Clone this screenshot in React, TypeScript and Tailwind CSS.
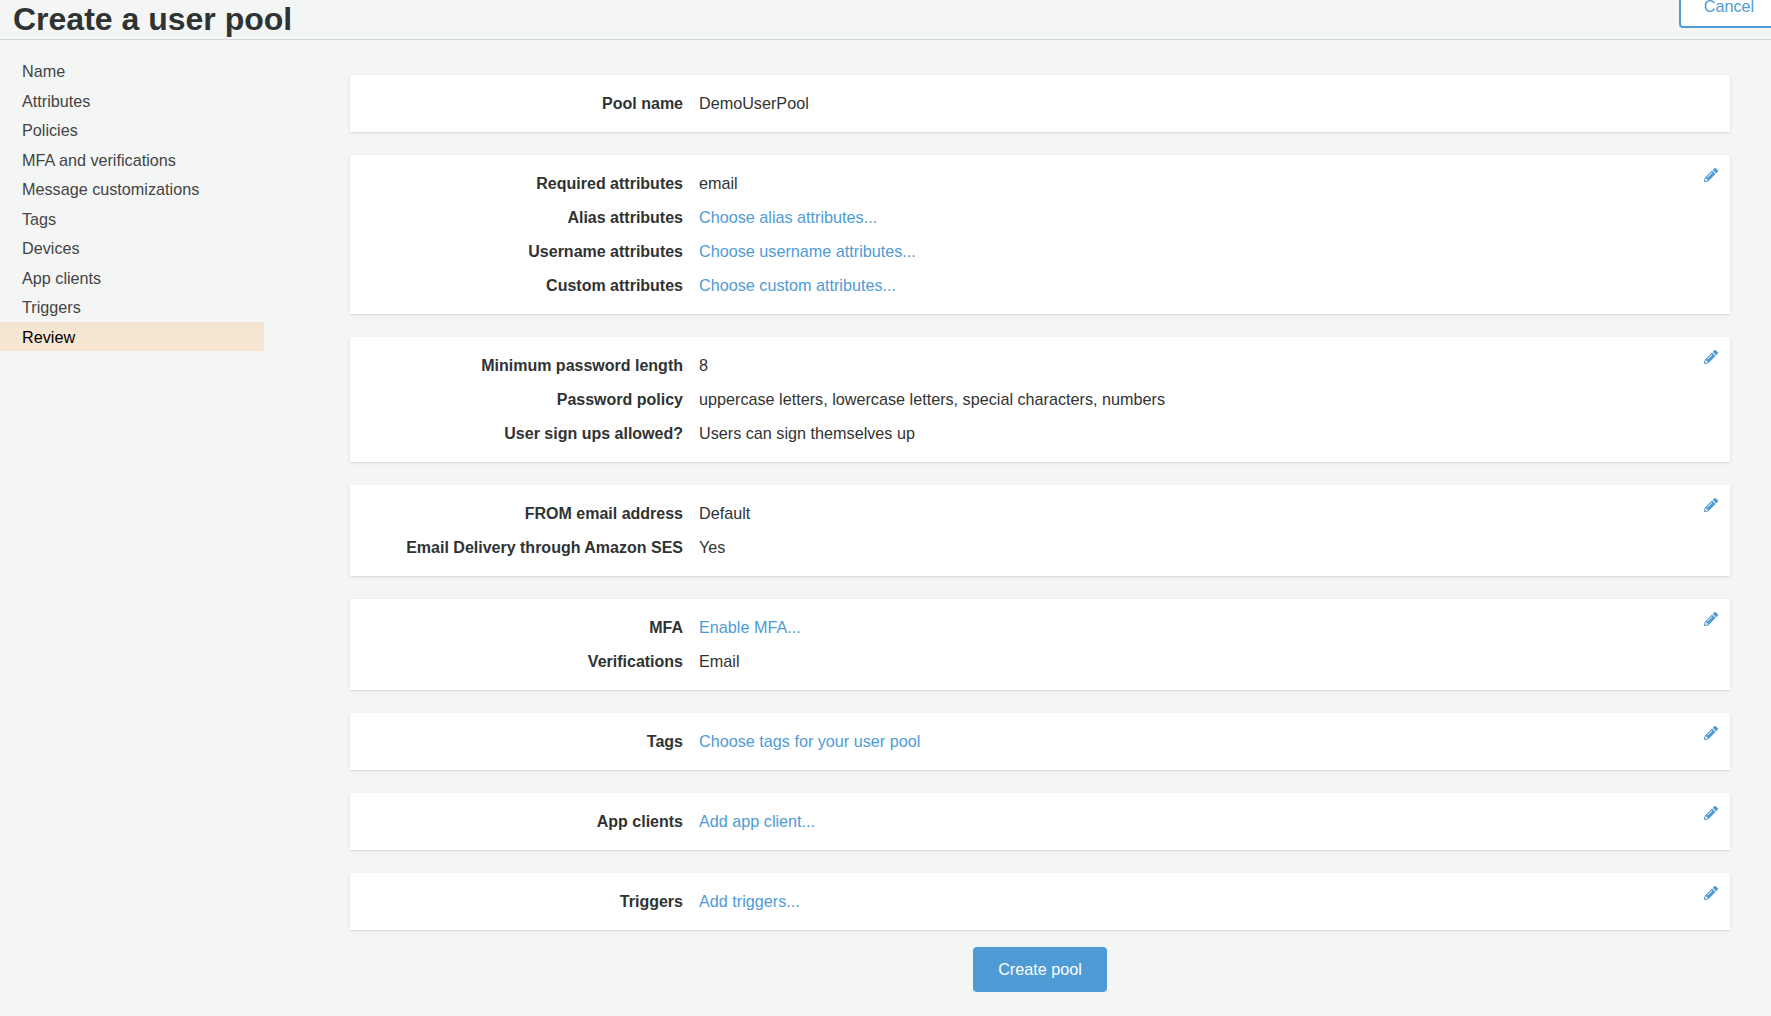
import { FaPencilAlt } from 'react-icons/fa';

const navItems = [
  'Name',
  'Attributes',
  'Policies',
  'MFA and verifications',
  'Message customizations',
  'Tags',
  'Devices',
  'App clients',
  'Triggers',
  'Review',
];

type Row = { label: string; value: string; link?: boolean };

const sections: { rows: Row[]; editable: boolean }[] = [
  { editable: false, rows: [{ label: 'Pool name', value: 'DemoUserPool' }] },
  {
    editable: true,
    rows: [
      { label: 'Required attributes', value: 'email' },
      { label: 'Alias attributes', value: 'Choose alias attributes...', link: true },
      { label: 'Username attributes', value: 'Choose username attributes...', link: true },
      { label: 'Custom attributes', value: 'Choose custom attributes...', link: true },
    ],
  },
  {
    editable: true,
    rows: [
      { label: 'Minimum password length', value: '8' },
      { label: 'Password policy', value: 'uppercase letters, lowercase letters, special characters, numbers' },
      { label: 'User sign ups allowed?', value: 'Users can sign themselves up' },
    ],
  },
  {
    editable: true,
    rows: [
      { label: 'FROM email address', value: 'Default' },
      { label: 'Email Delivery through Amazon SES', value: 'Yes' },
    ],
  },
  {
    editable: true,
    rows: [
      { label: 'MFA', value: 'Enable MFA...', link: true },
      { label: 'Verifications', value: 'Email' },
    ],
  },
  { editable: true, rows: [{ label: 'Tags', value: 'Choose tags for your user pool', link: true }] },
  { editable: true, rows: [{ label: 'App clients', value: 'Add app client...', link: true }] },
  { editable: true, rows: [{ label: 'Triggers', value: 'Add triggers...', link: true }] },
];

export default function App() {
  return (
    <div className="h-screen overflow-hidden bg-[#f4f6f6] font-['Liberation_Sans',Arial,sans-serif] text-[16.2px] text-[#333]">
      <header className="flex h-10 items-start justify-between border-b border-gray-300 pl-3.25">
        <h1 className="mt-px text-[32px] leading-9 font-bold text-[#2f3333]">Create a user pool</h1>
        <button className="-mt-4 -mr-2 h-11 w-25 rounded-sm border-2 border-[#4f9bd5] bg-white text-[#4f9bd5]">
          Cancel
        </button>
      </header>

      <div className="grid grid-cols-[350px_1fr]">
        <nav className="w-66 pt-4">
          {navItems.map((item) => (
            <div
              key={item}
              className={`flex h-[29.5px] items-center pt-px pl-5.5 ${
                item === 'Review' ? 'bg-[#f6e5d0] text-black' : 'text-[#444]'
              }`}
            >
              {item}
            </div>
          ))}
        </nav>

        <main className="pt-8.75 pr-10.25">
          <div className="flex flex-col gap-5.75">
            {sections.map((section, i) => (
              <section key={i} className="relative bg-white pt-2.75 pb-3 pl-3.25 shadow-sm">
                {section.rows.map((row) => (
                  <div key={row.label} className="flex h-8.5 items-center gap-4">
                    <div className="w-80 pt-0.5 text-right text-base font-bold text-[#2f3333]">{row.label}</div>
                    {row.link ? (
                      <a className="text-[#4f9bd5]">{row.value}</a>
                    ) : (
                      <div>{row.value}</div>
                    )}
                  </div>
                ))}
                {section.editable && (
                  <FaPencilAlt className="absolute top-3.25 right-3 size-3.5 text-[#4f9bd5]" />
                )}
              </section>
            ))}
          </div>
          <div className="mt-4.25 flex justify-center">
            <button className="h-11.25 rounded-sm bg-[#4f9bd5] px-6.25 text-white">Create pool</button>
          </div>
        </main>
      </div>
    </div>
  );
}
